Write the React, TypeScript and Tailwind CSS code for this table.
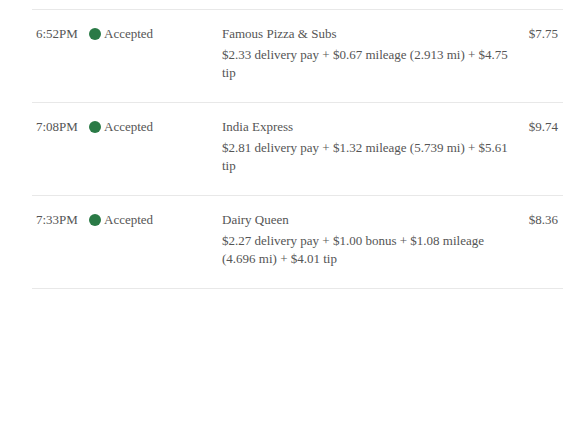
const rows = [
  {
    time: '6:52PM',
    name: 'Famous Pizza & Subs',
    detail: '$2.33 delivery pay + $0.67 mileage (2.913 mi) + $4.75 tip',
    total: '$7.75',
  },
  {
    time: '7:08PM',
    name: 'India Express',
    detail: '$2.81 delivery pay + $1.32 mileage (5.739 mi) + $5.61 tip',
    total: '$9.74',
  },
  {
    time: '7:33PM',
    name: 'Dairy Queen',
    detail: '$2.27 delivery pay + $1.00 bonus + $1.08 mileage (4.696 mi) + $4.01 tip',
    total: '$8.36',
  },
]

export default function App() {
  return (
    <div className="w-[586px] h-[428px] bg-white pt-[9px] font-['Liberation_Serif',serif] text-[13px] text-[#555]">
      <div className="ml-[32px] w-[531px] border-t border-[#e8e8e8]">
        {rows.map(row => (
          <div key={row.time} className="flex border-b border-[#e8e8e8] pt-[14px] pb-[20px]">
            <div className="w-[57px] pl-[4px] leading-[20px]">{row.time}</div>
            <div className="w-[133px] flex items-center h-[20px] gap-[3px]">
              <span className="w-[12px] h-[12px] rounded-full bg-[#2a7a46]" />
              <span>Accepted</span>
            </div>
            <div className="flex-1">
              <div className="leading-[20px]">{row.name}</div>
              <div className="mt-[2px] leading-[18px] w-[292px]">{row.detail}</div>
            </div>
            <div className="pr-[5px] leading-[20px]">{row.total}</div>
          </div>
        ))}
      </div>
    </div>
  )
}
